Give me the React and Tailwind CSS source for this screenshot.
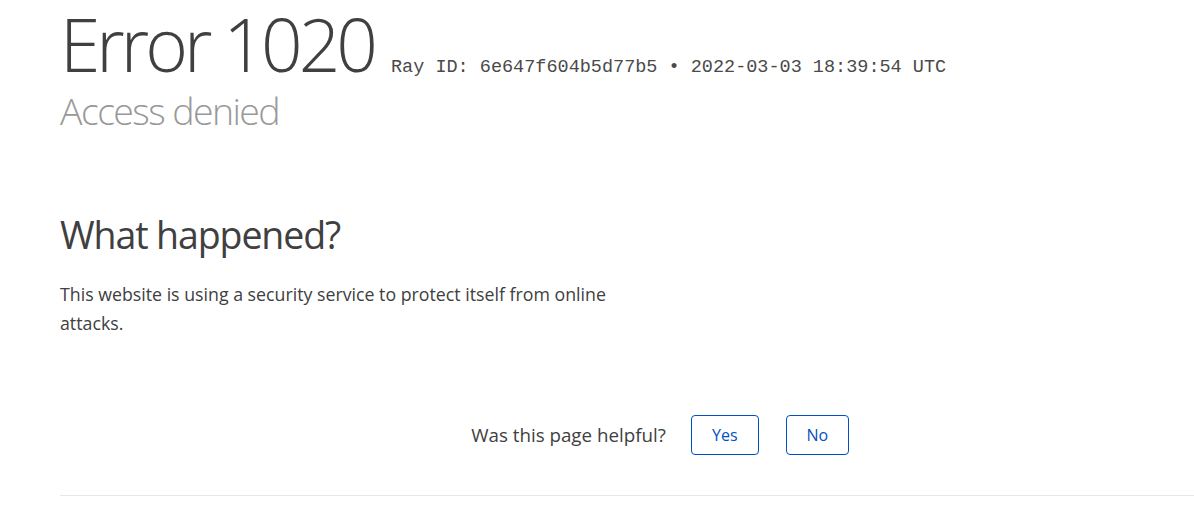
export default function App() {
  return (
    <div className="min-h-screen w-full overflow-hidden bg-white font-['Open_Sans',sans-serif] text-[#404040]">
      <div className="w-[1200px] pl-[60px]">
        <header className="pt-[7px]">
          <h1 className="flex items-baseline whitespace-nowrap">
            <span className="text-[73px] font-light leading-[74px] tracking-[-4px]">Error 1020</span>
            <small className="ml-[17px] font-['Liberation_Mono',monospace] text-[18.5px] leading-none text-[#4a4a4a]">
              Ray ID: 6e647f604b5d77b5 • 2022-03-03 18:39:54 UTC
            </small>
          </h1>
          <h2 className="mt-[7px] text-[37.5px] font-light leading-[45px] tracking-[-1.6px] text-[#999999]">
            Access denied
          </h2>
        </header>

        <section className="mt-[79px] w-[560px]">
          <h2 className="text-[37.5px] font-normal leading-[45px] tracking-[-1.1px] text-[#404040]">
            What happened?
          </h2>
          <p className="mt-[23px] text-[17.75px] leading-[29px] text-[#404040]">
            This website is using a security service to protect itself from online attacks.
          </p>
        </section>

        <div className="mt-[77px] flex w-[1200px] items-center justify-center">
          <span className="text-[18.75px] text-[#404040]">Was this page helpful?</span>
          <button className="ml-[25px] h-[40px] w-[68px] rounded-[4px] border border-[#0051c3] text-[16px] text-[#0051c3]">
            Yes
          </button>
          <button className="ml-[27px] h-[40px] w-[63px] rounded-[4px] border border-[#0051c3] text-[16px] text-[#0051c3]">
            No
          </button>
        </div>

        <div className="mt-[40px] h-px w-[1200px] bg-[#e8e8e8]" />
      </div>
    </div>
  );
}
